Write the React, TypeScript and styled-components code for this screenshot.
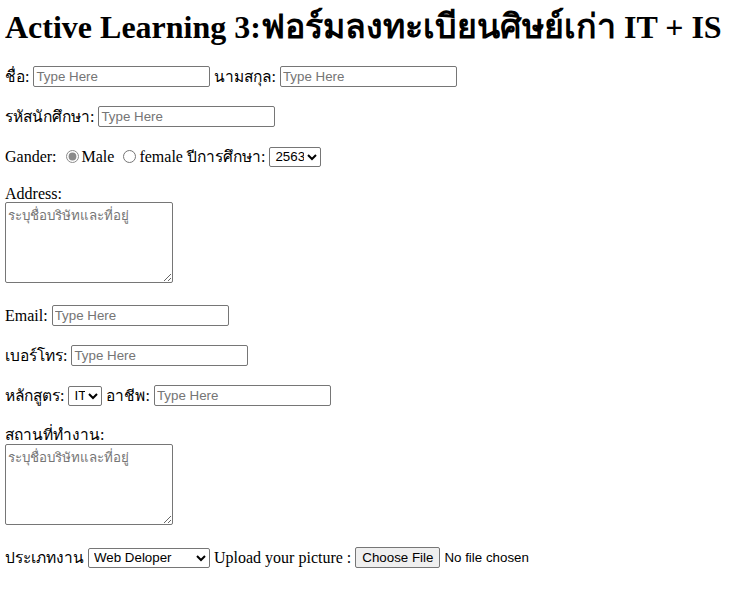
import styled, { createGlobalStyle } from 'styled-components';

const GlobalStyle = createGlobalStyle`
  html, body {
    margin: 0;
    padding: 0;
    background: #ffffff;
  }

  body {
    font-family: "Liberation Serif", "Times New Roman", serif;
    font-size: 16px;
    color: #000000;
  }
`;

const Page = styled.form`
  padding: 8px 5px 0 5px;
`;

const Title = styled.h1`
  font-size: 32px;
  font-weight: bold;
  margin: 0 0 21px 0;
  height: 37px;
  line-height: 37px;
  white-space: nowrap;
`;

// thai glyphs come from a fallback font here, so size them to the reference widths
const Thai = styled.span<{ $size?: number }>`
  font-size: ${(p) => p.$size ?? 15.5}px;
`;

const Row = styled.div`
  margin: 0 0 19px 0;
  height: 21px;
  line-height: 21px;
  display: flex;
  align-items: center;
  gap: 4px;
  white-space: nowrap;
`;

const Stack = styled.div`
  margin: 0 0 22px 0;
  display: flex;
  flex-direction: column;
  align-items: flex-start;
`;

const StackLabel = styled.label<{ $lh: number }>`
  line-height: ${(p) => p.$lh}px;
  height: ${(p) => p.$lh}px;
`;

const fieldFont = `
  font-family: "Liberation Sans", Arial, sans-serif;
  font-size: 13.33px;
`;

const TextInput = styled.input`
  ${fieldFont}
  box-sizing: border-box;
  width: 177px;
  height: 21px;
  padding: 1px 2px;
  border: 1px solid #767676;
  border-radius: 2px;
  color: #000;

  &::placeholder {
    color: #757575;
  }
`;

const TextArea = styled.textarea`
  ${fieldFont}
  box-sizing: border-box;
  width: 168px;
  height: 81px;
  padding: 2px;
  margin: 0;
  border: 1px solid #767676;
  border-radius: 2px;

  &::placeholder {
    color: #757575;
  }
`;

const Select = styled.select<{ $width: number }>`
  ${fieldFont}
  box-sizing: border-box;
  width: ${(p) => p.$width}px;
  height: 20px;
  border: 1px solid #767676;
  border-radius: 2px;
  background: #ffffff;
  color: #000;
  padding: 0 0 0 1px;
`;

const Radio = styled.input`
  margin: 0 3px 0 5px;
  width: 13px;
  height: 13px;
  accent-color: #8a8a8a;
`;

const RadioLabel = styled.label`
  display: inline-flex;
  align-items: center;
`;

const FileInput = styled.input`
  ${fieldFont}

  &::file-selector-button {
    ${fieldFont}
    height: 21px;
    padding: 1px 6px;
    margin-right: 4px;
    border: 1px solid #767676;
    border-radius: 2px;
    background: #efefef;
    color: #000;
  }
`;

export default function App() {
  return (
    <>
      <GlobalStyle />
      <Page onSubmit={(e) => e.preventDefault()}>
        <Title>
          Active Learning 3:<Thai $size={33.9}>ฟอร์มลงทะเบียนศิษย์เก่า</Thai> IT + IS
        </Title>

        <Row>
          <label htmlFor="fname"><Thai>ชื่อ</Thai>:</label>
          <TextInput id="fname" placeholder="Type Here" />
          <label htmlFor="lname"><Thai>นามสกุล</Thai>:</label>
          <TextInput id="lname" placeholder="Type Here" />
        </Row>

        <Row>
          <label htmlFor="sid"><Thai>รหัสนักศึกษา</Thai>:</label>
          <TextInput id="sid" placeholder="Type Here" />
        </Row>

        <Row>
          <span>Gander:</span>
          <RadioLabel>
            <Radio type="radio" name="gender" defaultChecked />
            Male
          </RadioLabel>
          <RadioLabel>
            <Radio type="radio" name="gender" />
            female
          </RadioLabel>
          <label htmlFor="year"><Thai>ปีการศึกษา</Thai>:</label>
          <Select id="year" $width={52} defaultValue="2563">
            <option>2563</option>
            <option>2564</option>
            <option>2565</option>
          </Select>
        </Row>

        <Stack>
          <StackLabel htmlFor="address" $lh={16}>Address:</StackLabel>
          <TextArea id="address" placeholder="ระบุชื่อบริษัทและที่อยู่" />
        </Stack>

        <Row>
          <label htmlFor="email">Email:</label>
          <TextInput id="email" placeholder="Type Here" />
        </Row>

        <Row>
          <label htmlFor="phone"><Thai>เบอร์โทร</Thai>:</label>
          <TextInput id="phone" placeholder="Type Here" />
        </Row>

        <Row>
          <label htmlFor="course"><Thai>หลักสูตร</Thai>:</label>
          <Select id="course" $width={34} defaultValue="IT">
            <option>IT</option>
            <option>IS</option>
          </Select>
          <label htmlFor="job"><Thai>อาชีพ</Thai>:</label>
          <TextInput id="job" placeholder="Type Here" />
        </Row>

        <Stack>
          <StackLabel htmlFor="workplace" $lh={19}><Thai>สถานที่ทำงาน</Thai>:</StackLabel>
          <TextArea id="workplace" placeholder="ระบุชื่อบริษัทและที่อยู่" />
        </Stack>

        <Row>
          <label htmlFor="jobtype"><Thai>ประเภทงาน</Thai></label>
          <Select id="jobtype" $width={122} defaultValue="Web Deloper">
            <option>Web Deloper</option>
            <option>Designer</option>
            <option>Tester</option>
          </Select>
          <label htmlFor="pic">Upload your picture :</label>
          <FileInput id="pic" type="file" />
        </Row>
      </Page>
    </>
  );
}
